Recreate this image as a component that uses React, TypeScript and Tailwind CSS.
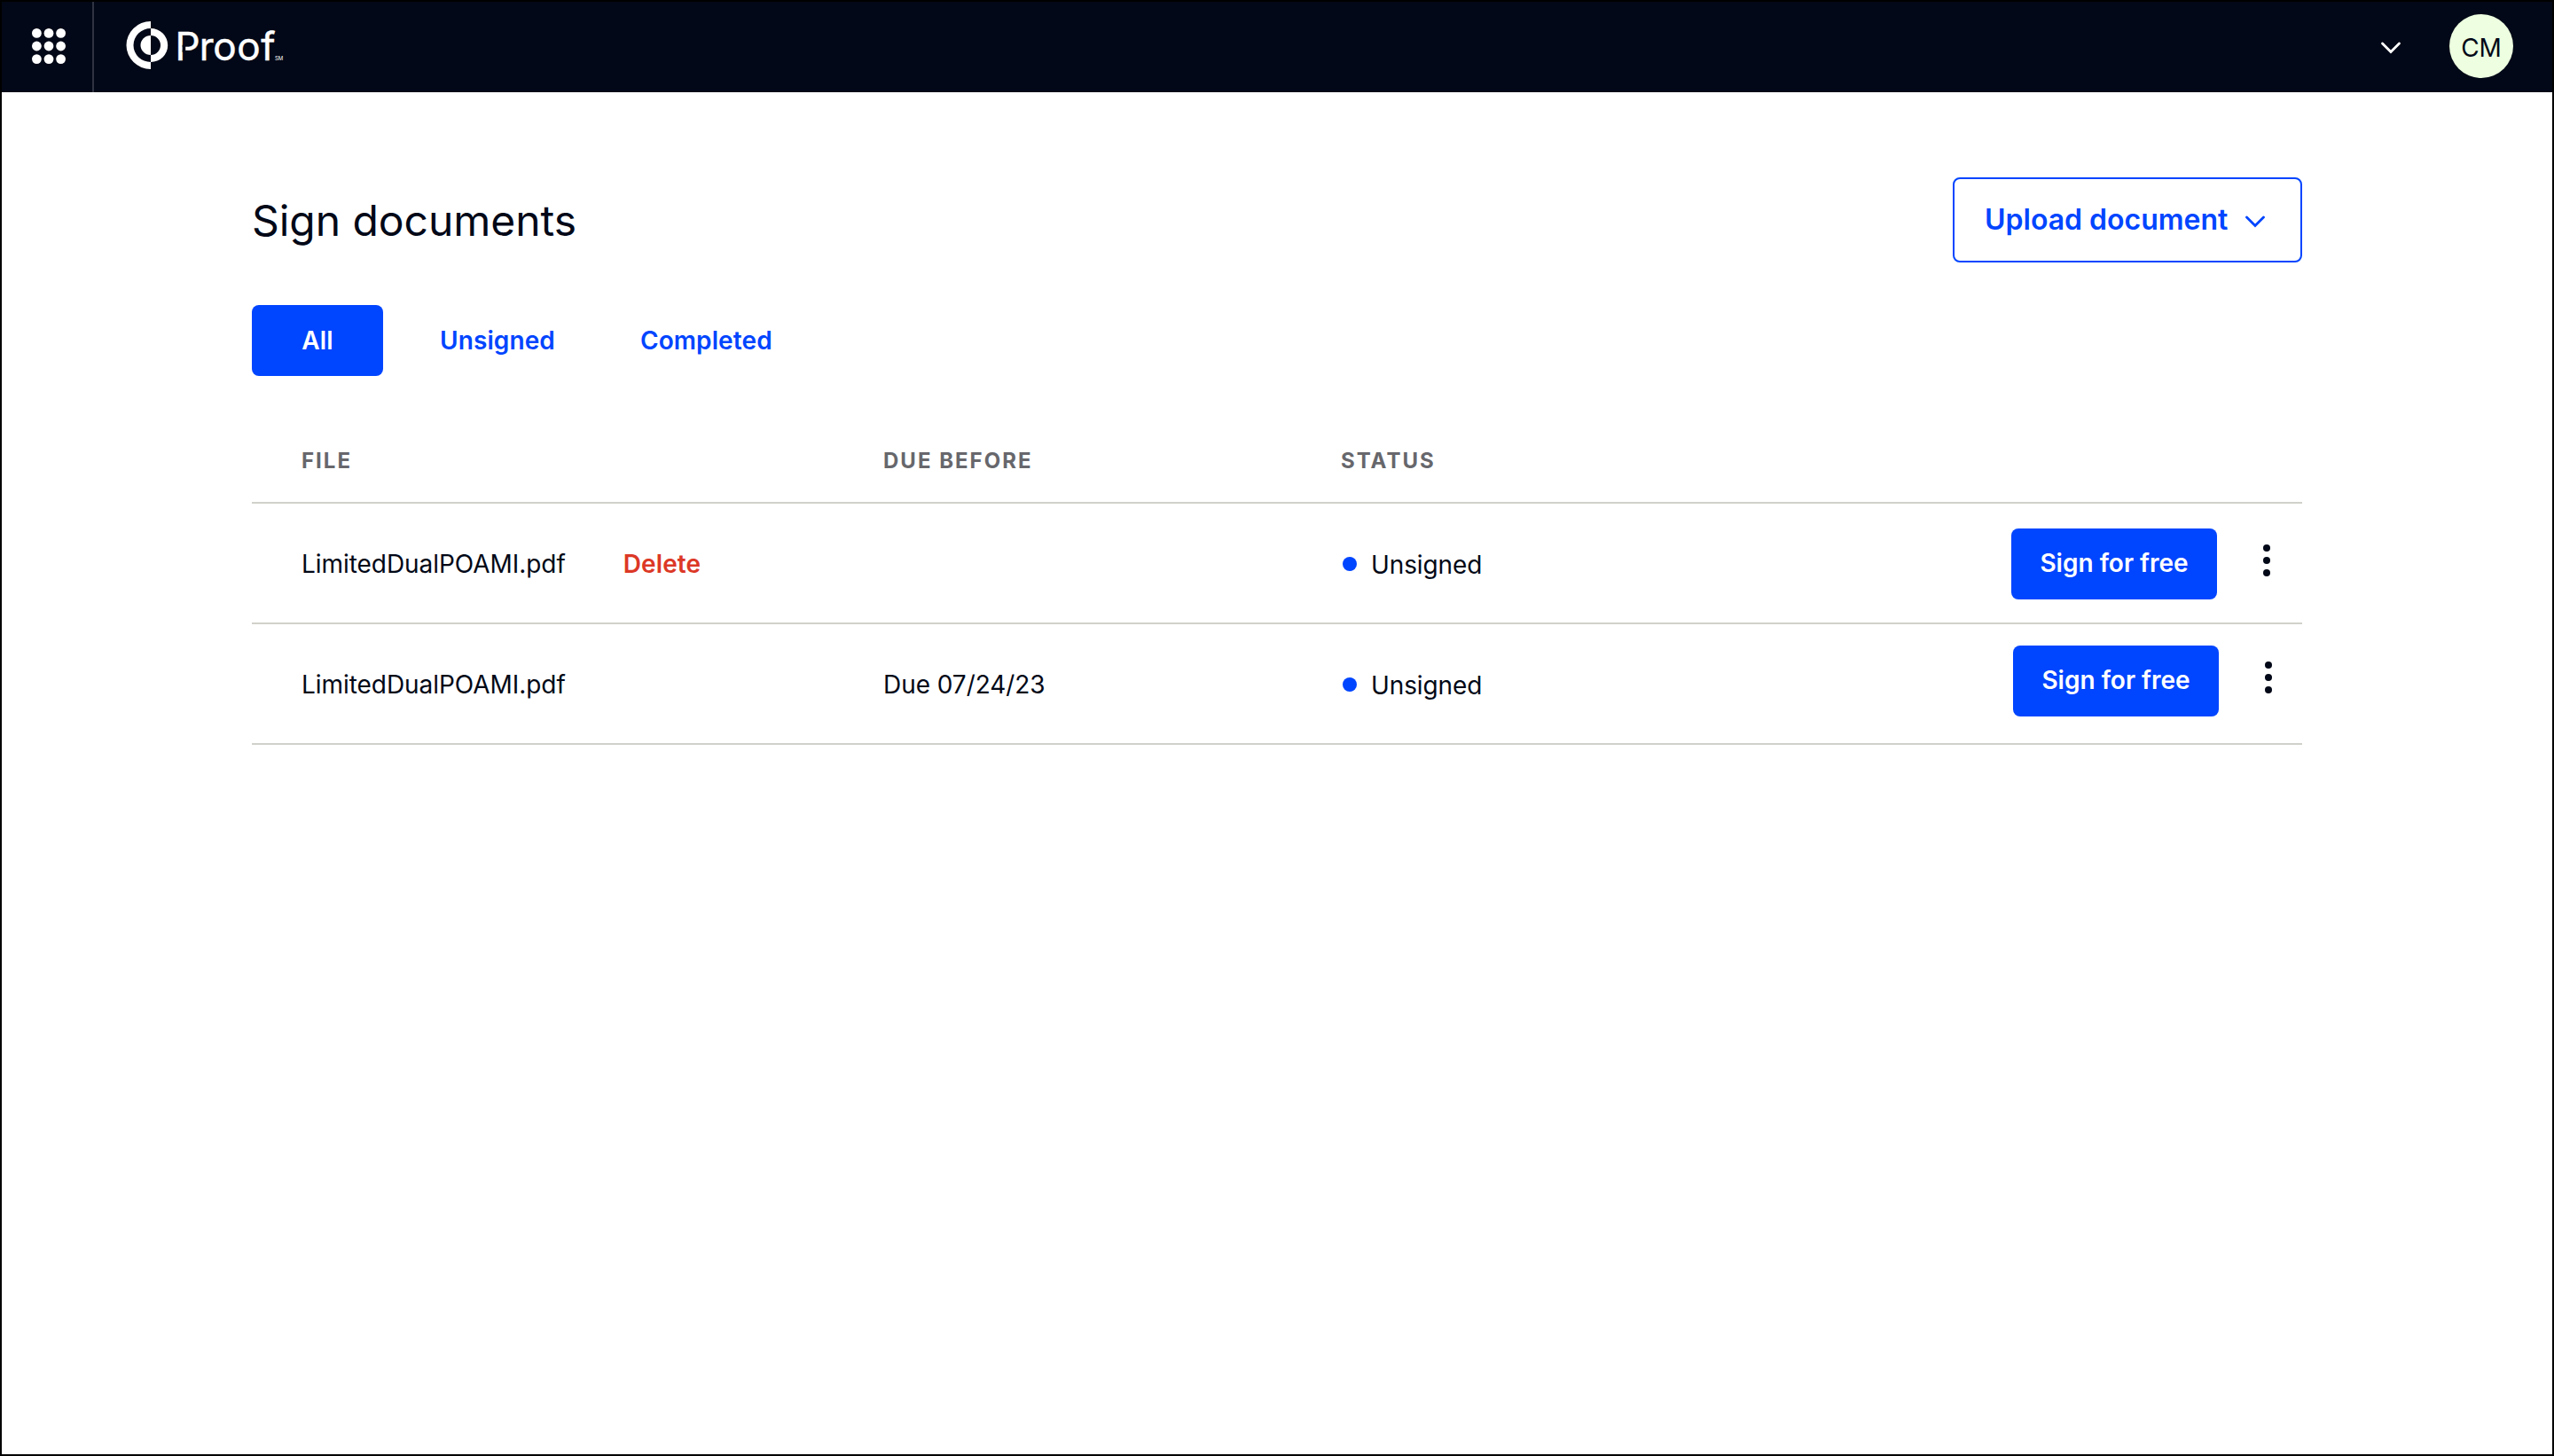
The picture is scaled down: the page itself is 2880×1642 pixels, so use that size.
import clsx from 'clsx';

type Document = {
  id: number;
  name: string;
  due?: string;
  status: string;
  deletable?: boolean;
};

const tabs = ['All', 'Unsigned', 'Completed'];

const documents: Document[] = [
  { id: 1, name: 'LimitedDualPOAMI.pdf', status: 'Unsigned', deletable: true },
  { id: 2, name: 'LimitedDualPOAMI.pdf', due: 'Due 07/24/23', status: 'Unsigned' },
];

function AppsIcon() {
  return (
    <svg className="h-[40px] w-[38px] fill-white" viewBox="0 0 38 40">
      { [5.4, 20, 34.6].map(y => [5.4, 19, 32.6].map(x => (
        <circle key={`${x}-${y}`} cx={x} cy={y} r="5.4" />
      ))) }
    </svg>
  );
}

function Logo() {
  return (
    <svg className="h-[64px] w-[180px]" viewBox="0 -5 180 64">
      <g fill="#fff" fontFamily="Inter, sans-serif">
        <path d="M28 0A27.5 27 0 0 0 28 54V46A19.5 19 0 0 1 28 8Z" />
        <path d="M28 16A11.5 11 0 0 0 28 38Z" />
        <path d="M28 8A19.2 19 0 0 1 28 46V38A11 11 0 0 0 28 16Z" />
        <text x="55.4 82.8 98.2 125.2 152.3" y="43.7" fontSize="44" fontWeight="430" stroke="#fff" strokeWidth="0.5">Proof</text>
        <text x="168" y="43.9" fontSize="6">SM</text>
      </g>
      {/* gap between the stem and the bowl of the P */}
      <rect x="63.6" y="26.7" width="3.6" height="8" fill="#020817" />
    </svg>
  );
}

function Chevron({ className }: { className?: string }) {
  return (
    <svg className={clsx('h-[14px] w-[24px]', className)} viewBox="0 0 24 14" fill="none" stroke="currentColor" strokeWidth="2.8" strokeLinecap="round">
      <path d="M2.5 2L12 11.5L21.5 2" />
    </svg>
  );
}

function Header() {
  return (
    <header className="flex h-[102px] items-center bg-[#020817] text-white">
      <button className="flex h-full w-[104px] items-center border-r-2 border-[#2f3342] pb-[2px] pl-[34px]">
        <AppsIcon />
      </button>
      <div className="pb-[4px] pl-[36px]">
        <Logo />
      </div>
      <button className="mt-[2px] ml-auto">
        <Chevron />
      </button>
      <div className="mr-[44px] mb-[2px] ml-[54px] flex size-[72px] items-center justify-center rounded-full bg-[#edffe0] text-[28px] text-[#020817]">
        <span className="pt-[3px]">CM</span>
      </div>
    </header>
  );
}

function DocumentRow({ document }: { document: Document }) {
  return (
    <tr className="h-[136px] [&>td]:border-b-2 [&>td]:border-[#d1d1cb]">
      <td className="pt-[2px] pl-[56px]">
        <div className="flex items-center">
          <span className="tracking-[-0.05px]">{ document.name }</span>
          { document.deletable && (
            <button className="ml-[65px] font-semibold tracking-[0.1px] text-[#dc3826]">Delete</button>
          ) }
        </div>
      </td>
      <td className="pt-[2px] tracking-[-0.05px]">{ document.due }</td>
      <td className="pt-[2px]">
        <div className="flex items-center">
          <span className="ml-[2px] size-[16px] rounded-full bg-[#0045ff]" />
          <span className="ml-[16px] pt-[2px] tracking-[-0.1px]">{ document.status }</span>
        </div>
      </td>
      <td>
        <div className={clsx('flex items-center justify-end', document.deletable ? 'pt-[2px] pr-[36px]' : 'pr-[34px] pb-[6px]')}>
          <button className="h-[80px] w-[232px] rounded-lg bg-[#0045ff] pb-[2px] font-semibold text-white">
            Sign for free
          </button>
          <button className="mb-[8px] ml-[52px] flex flex-col gap-[6px]">
            <span className="size-[8px] rounded-full bg-[#020817]" />
            <span className="size-[8px] rounded-full bg-[#020817]" />
            <span className="size-[8px] rounded-full bg-[#020817]" />
          </button>
        </div>
      </td>
    </tr>
  );
}

export default function App() {
  return (
    <div className="h-[1642px] w-[2880px] border-2 border-black bg-white font-['Inter',sans-serif] text-[28px] text-[#020817]">
      <Header />
      <main className="px-[282px] pt-[96px]">
        <div className="flex h-[96px] items-center justify-between">
          <h1 className="pt-[2px] text-[48px] tracking-[-0.05px]">Sign documents</h1>
          <button className="flex h-[96px] w-[394px] items-center rounded-lg border-2 border-[#0045ff] pl-[34px] text-[32px] font-semibold text-[#0045ff]">
            Upload document
            <Chevron className="mt-[3px] ml-[19px]" />
          </button>
        </div>

        <nav className="mt-[48px] flex h-[80px] font-semibold tracking-[0.1px] text-[#0045ff]">
          { tabs.map((tab, i) => (
            <button
              key={tab}
              className={clsx('h-full rounded-lg pb-[1px]', i === 0 ? 'mr-[16px] w-[148px] bg-[#0045ff] text-white' : 'px-[48px]')}
            >
              { tab }
            </button>
          )) }
        </nav>

        <table className="mt-[48px] w-full table-fixed border-separate border-spacing-0 text-left">
          <thead>
            <tr className="h-[96px] text-[24px] tracking-[2px] text-[#67676c] uppercase [&>th]:border-b-2 [&>th]:border-[#d1d1cb] [&>th]:pt-[2px]">
              <th className="w-[712px] pl-[56px] font-bold">File</th>
              <th className="w-[516px] font-bold">Due before</th>
              <th className="w-[400px] font-bold">Status</th>
              <th />
            </tr>
          </thead>
          <tbody>
            { documents.map(document => <DocumentRow key={document.id} document={document} />) }
          </tbody>
        </table>
      </main>
    </div>
  );
}
